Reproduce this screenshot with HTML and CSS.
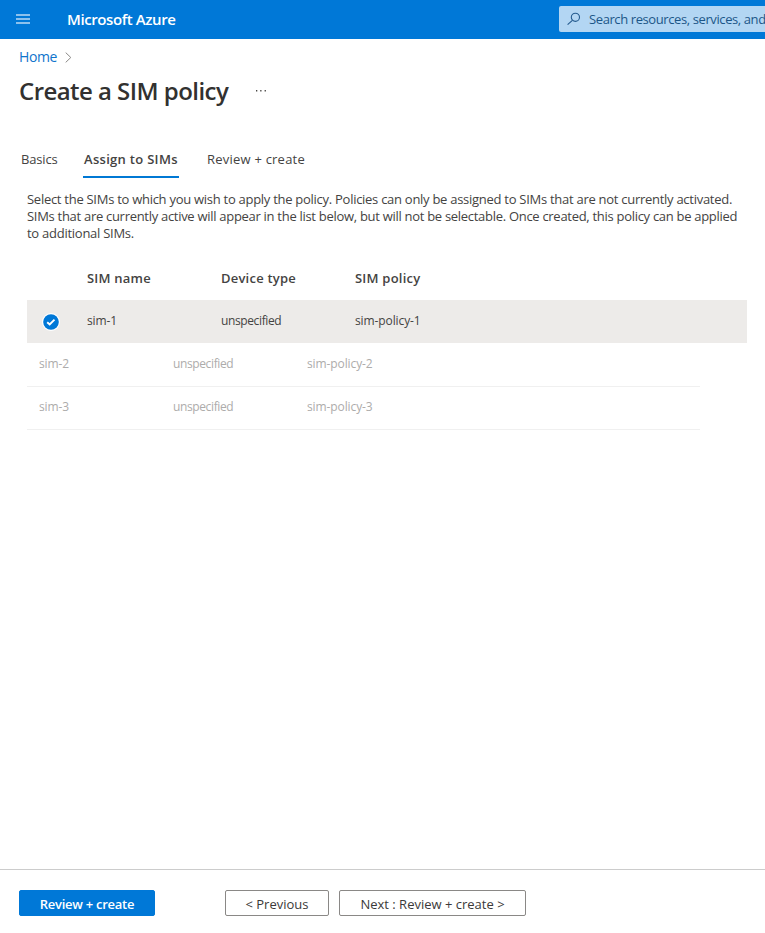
FILE: index.html
```html
<!DOCTYPE html>
<html lang="en">
<head>
<meta charset="utf-8">
<title>Create a SIM policy - Microsoft Azure</title>
<link rel="stylesheet" href="styles.css">
</head>
<body>
<header class="topbar">
  <svg class="menu" width="14" height="10" viewBox="0 0 14 10"><path d="M0 0h14v2H0zM0 4h14v2H0zM0 8h14v2H0z"/></svg>
  <span class="brand">Microsoft Azure</span>
  <div class="search">
    <svg width="14" height="14" viewBox="0 0 14 14"><circle cx="8.4" cy="5.3" r="4.1"/><path d="M5.4 8.3 .6 12.7"/></svg>
    <span class="search-text">Search resources, services, and</span>
  </div>
</header>
<nav class="crumbs">
  <a class="home">Home</a>
  <svg width="7" height="11" viewBox="0 0 7 11"><path d="M.7.6 5.8 5.5.7 10.4"/></svg>
</nav>
<div class="heading">
  <h1 class="title">Create a SIM policy</h1>
  <svg class="more" width="12" height="2" viewBox="0 0 12 2"><path d="M1 0h1.3v1.4H1zM5.2 0h1.3v1.4H5.2zM9.6 0h1.3v1.4H9.6z"/></svg>
</div>
<div class="tabs">
  <span class="tab basics">Basics</span>
  <span class="tab active">Assign to SIMs</span>
  <span class="tab review">Review + create</span>
</div>
<main class="content">
  <p class="intro"><span class="l1">Select the SIMs to which you wish to apply the policy. Policies can only be assigned to SIMs that are not currently activated.</span><br><span class="l2">SIMs that are currently active will appear in the list below, but will not be selectable. Once created, this policy can be applied</span><br><span class="l3">to additional SIMs.</span></p>
  <div class="row head"><span></span><span>SIM name</span><span>Device type</span><span>SIM policy</span></div>
  <div class="row selected">
    <svg class="check" width="18" height="18" viewBox="0 0 18 18"><circle cx="9" cy="9" r="9" fill="#fff"/><circle cx="9" cy="9" r="7.8" fill="#0078d7"/><path d="m5.2 9.2 2.5 2.3 4.8-4.9" fill="none" stroke="#fff" stroke-width="1.9"/></svg>
    <span>sim-1</span><span class="type">unspecified</span><span>sim-policy-1</span>
  </div>
  <div class="row disabled"><span>sim-2</span><span class="type">unspecified</span><span>sim-policy-2</span></div>
  <div class="row disabled"><span>sim-3</span><span class="type">unspecified</span><span>sim-policy-3</span></div>
</main>
<footer class="footer">
  <button class="btn primary">Review + create</button>
  <button class="btn previous">&lt; Previous</button>
  <button class="btn next">Next : Review + create &gt;</button>
</footer>
</body>
</html>
```
FILE: styles.css
```css
* { box-sizing: border-box; }
body { margin: 0; height: 933px; display: flex; flex-direction: column; overflow: hidden; background: #fff; color: #444342; font-family: "Open Sans", "Noto Sans", sans-serif; font-size: 13px; white-space: nowrap; }
svg { flex: none; }
.topbar { height: 39px; flex: none; display: flex; align-items: center; background: #0078d7; padding: 0 0 1px 16px; }
.menu { fill: #8cc1ed; }
.brand { margin-left: 37px; width: 492px; flex: none; color: #fff; font-size: 15px; font-weight: 600; letter-spacing: -0.4px; }
.search { flex: 1; height: 26px; display: flex; align-items: center; padding-left: 8px; background: #b3d6f3; border-radius: 2px 0 0 2px; color: #1c5688; }
.search svg { fill: none; stroke: #245b8e; stroke-width: 1.1; }
.search-text { margin-left: 8px; letter-spacing: -0.4px; }
.crumbs { height: 37px; flex: none; display: flex; align-items: center; padding-left: 19px; }
.home { color: #0f74cc; font-size: 14px; line-height: 18px; padding-bottom: 1px; letter-spacing: -0.4px; width: 46px; }
.crumbs svg { fill: none; stroke: #8a8886; }
.heading { height: 30px; flex: none; display: flex; align-items: center; padding-left: 19px; }
.title { margin: 0; width: 236px; font-size: 24px; line-height: 28px; padding-bottom: 1px; font-weight: 600; letter-spacing: -0.55px; color: #323130; }
.more { fill: #484644; }
.tabs { margin-top: 35px; height: 37px; flex: none; display: flex; padding-left: 21px; line-height: 36px; }
.basics { width: 62px; letter-spacing: -0.15px; }
.active { width: 96px; padding-left: 1px; border-bottom: 2px solid #0078d4; font-weight: 600; letter-spacing: 0.3px; }
.review { margin-left: 28px; letter-spacing: 0.22px; }
.content { flex: 1; padding: 13px 18px 0 27px; }
.intro { margin: 0; line-height: 17px; font-size: 13px; }
.l1 { letter-spacing: -0.275px; }
.l2 { letter-spacing: -0.292px; }
.l3 { letter-spacing: -0.26px; }
.row { display: grid; grid-template-columns: 48px 134px 134px 1fr; align-items: center; padding-left: 12px; height: 43px; font-size: 12px; letter-spacing: -0.1px; }
.row span { padding-bottom: 2px; }
.type { letter-spacing: -0.38px; }
.head { margin-top: 15px; font-size: 13px; font-weight: 600; letter-spacing: 0.22px; }
.selected { background: #edebe9; }
.check { margin: 1px 0 0 3px; }
.disabled { grid-template-columns: 134px 134px 1fr; width: 673px; color: #adacab; border-bottom: 1px solid #f0f0f0; }
.disabled + .disabled span { padding-bottom: 3px; }
.selected + .disabled { height: 44px; }
.footer { height: 64px; flex: none; border-top: 1px solid #ccc; display: flex; padding: 20px 0 0 19px; }
.btn { height: 26px; padding: 2px 0 0; border: 1px solid #8a8886; border-radius: 2px; background: #fff; color: #3b3a39; font: 13px/22px "Open Sans", sans-serif; }
.primary { width: 136px; border-color: #0078d7; background: #0078d7; color: #fff; font-weight: 600; letter-spacing: -0.27px; }
.previous { width: 104px; margin-left: 70px; }
.next { width: 187px; margin-left: 10px; }
```
